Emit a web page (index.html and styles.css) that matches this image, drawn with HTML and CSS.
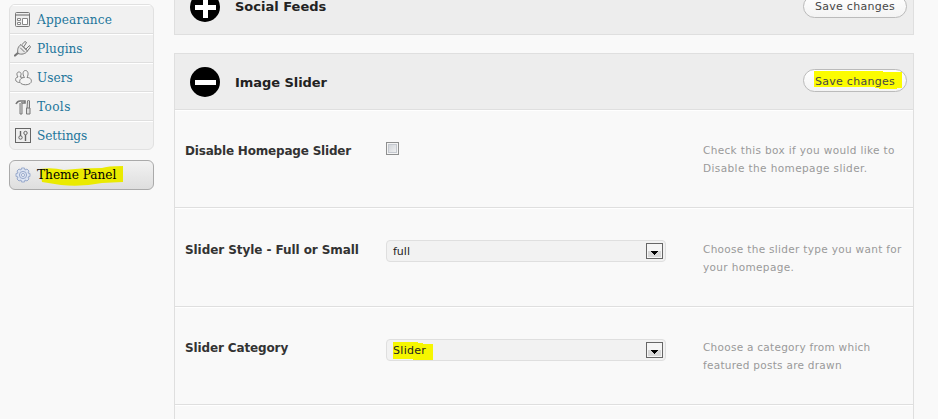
FILE: index.html
```html
<!DOCTYPE html>
<html lang="en">
<head>
<meta charset="utf-8">
<title>Theme Panel</title>
<link rel="stylesheet" href="styles.css">
</head>
<body>
<div class="page">
  <nav class="sidebar">
    <ul class="menu">
      <li><svg class="icon" viewBox="0 0 18 18"><rect x="1.500" y="1.500" width="14" height="14" rx="1" fill="#eee" stroke="#777"/><path d="M2 4h13" stroke="#aaa" stroke-width="2"/><path d="M3.500 7.500h3v2h-3zM3.500 11.500h3v2h-3zM8.500 7.500h5v6h-5z" fill="#fff" stroke="#888"/></svg><a class="m-appearance">Appearance</a></li>
      <li><svg class="icon" viewBox="0 0 18 18" fill="none" stroke="#777" stroke-linecap="round"><path d="M1 15.500l3.500-3" stroke-width="2.200"/><path d="M4 13.500c-1-4 0-7 3-9l6.500 6.500c-2 3-6 4-9.500 2.500z" fill="#e8e8e8"/><path d="M8 4.500l3-3 1.500 1-2.500 4M12 9l3.500-3.500 1 1.500-3 4M6.500 8l4 4M8.500 6l4 4"/></svg><a class="m-plugins">Plugins</a></li>
      <li><svg class="icon" viewBox="0 0 18 18" fill="#f4f4f4" stroke="#808080"><path d="M4 8C2 5 3 3 5 3s3 2 1 5c3 0 4 2 3 4-2 2-5 2-7 0-1-2 0-4 2-4z"/><path d="M10.500 8.500C8 5 9 1.500 11.500 1.500s3.500 3.500 1.500 7c4 0 5 3 4 5-2 3-9 3-11 0-1-2 .5-5 4.500-5z"/></svg><a class="m-users">Users</a></li>
      <li><svg class="icon" viewBox="0 0 18 18" fill="none" stroke="#777"><path d="M2 6c1-2 2-3 4-3h5v2H7" stroke-width="1.600"/><path d="M6 5v11h2V5M13 10l.5-7 1-1 1 1v7M12.500 10h3.500v6h-3.500z" fill="#ddd"/></svg><a class="m-tools">Tools</a></li>
      <li><svg class="icon" viewBox="0 0 18 18" fill="none" stroke="#666"><rect x="1.500" y="1.500" width="15" height="14" fill="#eee"/><path d="M6.500 4v5M11.500 8v6" stroke-width="1.400"/><circle cx="6.500" cy="10.500" r="1.700"/><circle cx="11.500" cy="6" r="1.700"/></svg><a class="m-settings">Settings</a></li>
    </ul>
    <div class="current">
      <svg class="mark" viewBox="0 0 88 22"><path d="M3 4Q15 2 27 5Q43 3 65 3Q70 1 86 1V17L65 18Q45 22 24 20L5 17z" fill="#eaea00"/></svg>
      <svg class="icon" viewBox="0 0 18 18" fill="#dce4f2" stroke="#98a9cb"><path d="M7.500 2h3l.5 2 2-1 2 2-1 2 2 .5v3l-2 .5 1 2-2 2-2-1-.5 2h-3L7 14l-2 1-2-2 1-2-2-.5v-3L4 7 3 5l2-2 2 1z"/><circle cx="9" cy="9" r="3.600"/><circle cx="9" cy="9" r="1.500" fill="#fff"/></svg>
      <a class="m-theme">Theme Panel</a>
    </div>
  </nav>
  <main class="content">
    <section class="panel collapsed">
      <header class="head">
        <svg class="toggle" viewBox="0 0 30 30"><circle cx="15" cy="15" r="15"/><path d="M5 15.500h21M15.500 5v21" stroke="#fff" stroke-width="5"/></svg>
        <h3>Social Feeds</h3>
        <button class="save"><span>Save changes</span></button>
      </header>
    </section>
    <section class="panel">
      <header class="head">
        <svg class="toggle" viewBox="0 0 30 30"><circle cx="15" cy="15" r="15"/><path d="M5 15.500h21" stroke="#fff" stroke-width="5"/></svg>
        <h3 class="t-image">Image Slider</h3>
        <button class="save"><svg class="mark" viewBox="0 0 88 18"><path d="M0 0H69V1H88V17H83V18H65V17H61V16H0z" fill="#fcfc00"/></svg><span>Save changes</span></button>
      </header>
      <div class="row first">
        <label class="l-disable">Disable Homepage Slider</label>
        <div class="field"><span class="check"></span></div>
        <p class="help"><span class="h1">Check this box if you would like to</span><br><span class="h2">Disable the homepage slider.</span></p>
      </div>
      <div class="row second">
        <label class="l-style">Slider Style - Full or Small</label>
        <div class="field"><div class="select"><span>full</span><svg class="arrow" viewBox="0 0 17 16"><use href="#drop"/></svg></div></div>
        <p class="help"><span class="h3">Choose the slider type you want for</span><br><span class="h4">your homepage.</span></p>
      </div>
      <div class="row third">
        <label class="l-cat">Slider Category</label>
        <div class="field"><div class="select"><svg class="mark" viewBox="0 0 40 18"><path d="M0 0H25V1H30V2H40V18H20V17H0z" fill="#f6f600"/></svg><span class="v-slider">Slider</span><svg class="arrow" viewBox="0 0 17 16"><g id="drop"><rect x=".5" y=".5" width="16" height="15" fill="#f5f5f5" stroke="#666"/><path d="M2 8h13v6H2z" fill="#d8d8d8"/><path d="M5 8h7v1h-1v1h-1v1H9v1H8v-1H7v-1H6V9H5z" fill="#000"/></g></svg></div></div>
        <p class="help"><span class="h5">Choose a category from which</span><br><span class="h6">featured posts are drawn</span></p>
      </div>
      <div class="row"></div>
    </section>
  </main>
</div>
</body>
</html>
```
FILE: styles.css
```css
* { box-sizing: border-box; }
html, body { margin: 0; height: 100%; overflow: hidden; }
body { background: #f9f9f9; font-family: "DejaVu Sans", Verdana, sans-serif; color: #222; }
.page { display: flex; gap: 20px; height: 419px; padding-left: 9px; overflow: hidden; }
.sidebar { width: 145px; flex: none; padding-top: 4px; font: 13.5px/26px "DejaVu Serif Condensed", "DejaVu Serif", serif; font-stretch: condensed; }
.menu { list-style: none; margin: 0; padding: 0; height: 146px; border: 1px solid #e1e1e1; border-radius: 6px; background: #f1f1f1; overflow: hidden; }
.menu li { display: flex; height: 29px; border-top: 1px solid #fff; border-bottom: 1px solid #dfdfdf; align-items: center; padding-left: 4px; gap: 5px; color: #21759b; }
.menu li:last-child { border-bottom: 0; }
.icon { width: 18px; height: 18px; flex: none; }
.current { position: relative; margin-top: 10px; height: 30px; border: 1px solid #aaa; border-radius: 6px; background: linear-gradient(#f2f2f2, #dedede); display: flex; align-items: center; gap: 5px; padding-left: 4px; color: #000; }
a { position: relative; white-space: nowrap; padding-bottom: 2px; }
.m-appearance { letter-spacing: .14px; }
.m-tools { letter-spacing: .4px; }
.m-settings { letter-spacing: -.1px; }
.current .mark { position: absolute; left: 27px; top: 4px; width: 88px; height: 22px; }
.content { width: 740px; }
.panel { border: 1px solid #dfdfdf; width: 740px; }
.collapsed { margin-top: -22px; margin-bottom: 18px; }
.head { height: 56px; background: #ededed; border-bottom: 1px solid #dfdfdf; display: flex; align-items: center; padding: 0 6px 0 15px; }
.collapsed .head { border-bottom: 0; height: 55px; }
.toggle { width: 30px; height: 30px; margin-right: 15px; }
h3 { margin: 0; font-size: 13px; line-height: 18px; white-space: nowrap; }
.t-image { padding-top: 2px; letter-spacing: -.06px; }
.save { position: relative; margin-left: auto; margin-bottom: 2px; width: 104px; height: 23px; border: 1px solid #bbb; border-radius: 12px; background: linear-gradient(#fff, #f3f3f3); font: 11px/15px "DejaVu Sans", Verdana, sans-serif; letter-spacing: .28px; color: #464646; padding: 1px 0 0; white-space: nowrap; }
.collapsed .save { margin-bottom: 0; padding-top: 0; }
.save span { position: relative; }
.save .mark { position: absolute; left: 10px; top: 1px; width: 88px; height: 18px; }
.row { display: grid; grid-template-columns: 201px 317px 215px; height: 99px; border-bottom: 1px solid #dfdfdf; border-top: 1px solid #fff; padding: 31px 0 0 10px; align-items: start; }
.row.first, .row.third { height: 98px; }
.second label { margin-top: 1px; }
label { font-weight: bold; font-size: 12px; line-height: 18px; white-space: nowrap; color: #333; }
.l-disable { letter-spacing: -.19px; }
.l-style { letter-spacing: -.07px; }
.l-cat { letter-spacing: -.13px; }
.help { margin: -1px 0 0; font-size: 10.5px; line-height: 18px; color: #999; white-space: nowrap; }
.second .help { margin-top: 0; }
.h1 { letter-spacing: .35px; }
.h2 { letter-spacing: .4px; }
.h3 { letter-spacing: .31px; }
.h4 { letter-spacing: .35px; }
.h5 { letter-spacing: .27px; }
.h6 { letter-spacing: .27px; }
.check { display: block; width: 13px; height: 13px; border: 1px solid #8e8f8f; background: linear-gradient(135deg, #cbcfd5, #f6f6f6); box-shadow: inset 0 0 0 1px #f4f4f4, inset 0 0 0 2px #c5c9d0; }
.select { position: relative; display: flex; align-items: center; justify-content: space-between; width: 280px; height: 22px; border: 1px solid #dfdfdf; border-radius: 4px; background: #f2f2f2; padding: 0 2px 0 6px; font-size: 11px; }
.select span { position: relative; }
.v-slider { letter-spacing: .3px; }
.arrow { width: 17px; height: 16px; }
.select .mark { position: absolute; left: 6px; top: 2px; width: 40px; height: 18px; }
```
